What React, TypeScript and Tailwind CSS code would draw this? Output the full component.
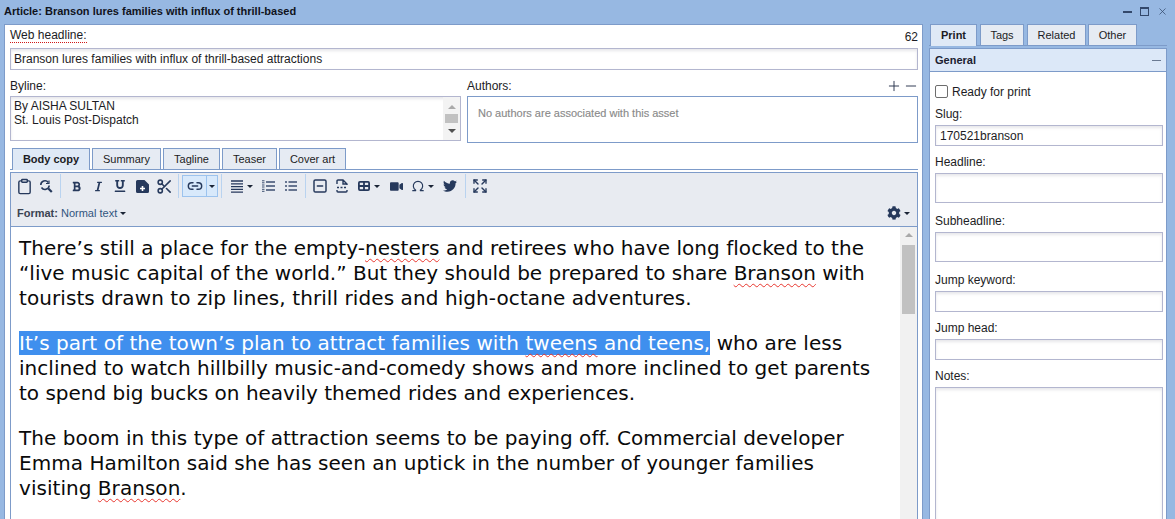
import React from "react";
import { Clipboard, Link2, SquareMinus, Omega, Expand, X, Plus, Minus, Scissors } from "lucide-react";
import { FaBold, FaItalic, FaUnderline, FaVideo, FaTwitter, FaCog } from "react-icons/fa";

const ICON = "#26395c";
const Caret = ({ ml = 3 }: { ml?: number }) => (
  <span className="w-0 h-0 shrink-0 border-x-[3px] border-x-transparent border-t-[3px] border-t-[#1a2436]" style={{ marginLeft: ml }} />
);
const Sep = () => <span className="w-px h-[24px] bg-[#b9d3f0] shrink-0" />;
const Gap = ({ w }: { w: number }) => <span className="shrink-0" style={{ width: w }} />;
const Cell = ({ children }: { children: React.ReactNode }) => (
  <span className="flex items-center justify-center shrink-0 h-[24px] w-[22px]">{children}</span>
);
const Wavy = ({ children }: { children: React.ReactNode }) => (
  <span className="underline decoration-wavy decoration-[#e8362e] decoration-1 underline-offset-[3px]">{children}</span>
);
const Tab = ({ label, active, w }: { label: string; active?: boolean; w: number }) => (
  <div
    className={`flex items-center justify-center border border-[#7d9bc9] border-b-0 shrink-0 ${active ? "h-[22px] bg-[#dfe9f6] font-bold relative" : "h-[21px] bg-[#e6ebf3]"}`}
    style={{ width: w }}
  >
    {label}
  </div>
);
const inputCls = "border border-[#b3b6cf] bg-white shadow-[inset_0_2px_3px_rgba(120,120,140,0.18)]";
const ScrollArrow = ({ up, color }: { up?: boolean; color: string }) => (
  <span
    className={`w-0 h-0 border-x-[4px] border-x-transparent ${up ? "border-b-[4px]" : "border-t-[4px]"}`}
    style={up ? { borderBottomColor: color } : { borderTopColor: color }}
  />
);
const Field = ({ label, h, mt }: { label: string; h: number; mt: number }) => (
  <div style={{ marginTop: mt }}>
    <div className="h-[14px] leading-[14px] mb-[4px]">{label}</div>
    <div className={inputCls} style={{ height: h }} />
  </div>
);

export default function App() {
  return (
    <div className="w-[1175px] h-[519px] overflow-hidden bg-[#97b8e2] text-[12px] text-[#1c1c24] flex flex-col" style={{ fontFamily: '"Liberation Sans", Arial, sans-serif' }}>
      {/* title bar */}
      <div className="h-[24px] shrink-0 flex items-center justify-between pl-[4px] pr-[7px]">
        <span className="font-bold text-[11px] text-[#10131c] -mt-[2px]">Article: Branson lures families with influx of thrill-based</span>
        <div className="flex items-center gap-[8px] -mt-[1px]">
          <span className="w-[9px] h-[2px] bg-[#33486b]" />
          <span className="w-[9px] h-[9px] border border-[#33486b] border-t-2" />
          <X size={11} strokeWidth={1.6} color="#33486b" />
        </div>
      </div>

      <div className="flex-1 flex min-h-0">
        {/* left panel */}
        <div className="ml-[4px] w-[919px] shrink-0 border-l border-t border-r border-[#7d9bc9] bg-white pl-[5px] pr-[4px] flex flex-col min-h-0">
          <div className="h-[23px] flex items-center justify-between">
            <span className="border-b border-dotted border-[#d01818] leading-[13px] mt-[-1px]">Web headline:</span>
            <span>62</span>
          </div>
          <div className={`h-[22px] px-[3px] flex items-center ${inputCls}`}>Branson lures families with influx of thrill-based attractions</div>

          <div className="mt-[6px] flex gap-[6px] h-[65px] shrink-0">
            <div className="w-[451px] shrink-0 flex flex-col">
              <div className="h-[20px] shrink-0 flex items-center">Byline:</div>
              <div className={`h-[45px] shrink-0 flex pl-[3px] ${inputCls}`}>
                <div className="flex-1 leading-[14px] pt-[2px]">By AISHA SULTAN<br />St. Louis Post-Dispatch</div>
                <div className="w-[17px] bg-[#f3f3f3] flex flex-col items-center pt-[8px]">
                  <ScrollArrow up color="#a9a9a9" />
                  <span className="w-[13px] h-[9px] bg-[#c1c1c1] mt-[5px]" />
                  <span className="mt-[6px] flex"><ScrollArrow color="#505050" /></span>
                </div>
              </div>
            </div>
            <div className="flex-1 flex flex-col">
              <div className="h-[20px] shrink-0 flex items-center justify-between">
                <span>Authors:</span>
                <span className="flex gap-[1px] -mr-[1px] text-[#26304a]"><Plus size={16} strokeWidth={1.4} /><Minus size={16} strokeWidth={1.4} /></span>
              </div>
              <div className="h-[47px] shrink-0 border border-[#7d9bc9] pl-[10px] pt-[9px] text-[#8a8a8a] text-[11px] leading-[14px] [-webkit-text-stroke:0.15px_#8a8a8a]">No authors are associated with this asset</div>
            </div>
          </div>

          {/* tabs */}
          <div className="mt-[7px] flex items-start gap-[2px] pl-[2px] h-[22px] shrink-0 text-[11px] border-b border-[#7d9bc9]">
            <Tab label="Body copy" active w={78} />
            <Tab label="Summary" w={69} />
            <Tab label="Tagline" w={57} />
            <Tab label="Teaser" w={55} />
            <Tab label="Cover art" w={67} />
          </div>

          {/* editor */}
          <div className="mt-[2px] flex-1 min-h-0 border-x border-[#7d9bc9] flex flex-col">
            <div className="h-[55px] shrink-0 bg-[#e8ebf1] border-y border-[#7d9bc9] pl-[2px]">
              <div className="h-[26px] flex items-center">
                <Cell><Clipboard size={17} color={ICON} strokeWidth={2} /></Cell>
                <Cell>
                  <svg width="14" height="14" viewBox="0 0 14 14" fill="none" stroke={ICON} strokeWidth="1.6"><path d="M1.800 6a4.200 4.200 0 0 1 7.500-2.600" /><path d="M10.200 6.500a4.200 4.200 0 0 1-7.700 2" /><path d="M9.300 9.500l3.500 3.500" strokeWidth="2.200" /><path d="M10 1.500v3h-3" strokeWidth="1.200" /></svg>
                </Cell>
                <Gap w={3} /><Sep /><Gap w={4} />
                <Cell><FaBold size={11} color={ICON} /></Cell>
                <Cell><FaItalic size={11} color={ICON} /></Cell>
                <Cell><FaUnderline size={12} color={ICON} /></Cell>
                <Cell>
                  <svg width="13" height="13" viewBox="0 0 13 13"><path d="M1.500 0H8.500L13 4.500V11.500A1.500 1.500 0 0 1 11.500 13H1.500A1.500 1.500 0 0 1 0 11.500V1.500A1.500 1.500 0 0 1 1.500 0Z" fill={ICON} /><path d="M6.500 6v5M4 8.500h5" stroke="#fff" strokeWidth="1.600" /></svg>
                </Cell>
                <Cell><Scissors size={17} color={ICON} strokeWidth={2.2} /></Cell>
                <Gap w={3} /><Sep /><Gap w={3} />
                <div className="h-[22px] w-[36px] shrink-0 flex border border-[#9cc3ee] bg-[#d8e9fb]">
                  <span className="w-[24px] flex items-center justify-center border-r border-[#9cc3ee]"><Link2 size={16} color={ICON} strokeWidth={2.2} /></span>
                  <span className="flex-1 flex items-center justify-center"><Caret ml={0} /></span>
                </div>
                <Gap w={3} /><Sep /><Gap w={4} />
                <Cell>
                  <svg width="12" height="13" viewBox="0 0 12 13" stroke={ICON} strokeWidth="1.300"><path d="M0 1h12M0 3.800h12M0 6.600h12M0 9.400h12M0 12.200h12" /></svg>
                </Cell>
                <Caret ml={-1} />
                <Gap w={4} />
                <Cell>
                  <svg width="13" height="12" viewBox="0 0 13 12" stroke="#3d4f70" strokeWidth="1.700"><path d="M4 2h9M4 6h9M4 10h9" /><path d="M0 .8h2.500M0 2.800h2.500M0 5h2.500M0 7h2.500M0 9.300h2.500M0 11.300h2.500" strokeWidth="1" /></svg>
                </Cell>
                <Gap w={1} />
                <Cell>
                  <svg width="12" height="12" viewBox="0 0 12 12" stroke="#3d4f70" strokeWidth="1.700"><path d="M3.500 2h8.500M3.500 6h8.500M3.500 10h8.500M0 2h2M0 6h2M0 10h2" /></svg>
                </Cell>
                <Gap w={3} /><Sep /><Gap w={3} />
                <Cell><SquareMinus size={16} color={ICON} strokeWidth={2.2} /></Cell>
                <Cell>
                  <svg width="12" height="14" viewBox="0 0 12 14" fill="none" stroke={ICON} strokeWidth="1.400"><path d="M1 5V2a1 1 0 0 1 1-1h5l4 4v1M7 1v4h4M11 11v1a1 1 0 0 1-1 1H2a1 1 0 0 1-1-1v-1" /><path d="M1 8.500h10" strokeDasharray="2 1.500" /></svg>
                </Cell>
                <Cell>
                  <svg width="12" height="10" viewBox="0 0 12 10" fill="none" stroke={ICON} strokeWidth="1.800"><rect x="0.900" y="0.900" width="10.200" height="8.200" rx="1" /><path d="M0.900 5h10.200M6 0.900v8.200" /></svg>
                </Cell>
                <Caret ml={-1} />
                <Gap w={5} />
                <Cell><FaVideo size={13} color={ICON} /></Cell>
                <Cell><Omega size={14} color={ICON} strokeWidth={2} /></Cell>
                <Caret ml={-1} />
                <Gap w={5} />
                <Cell><FaTwitter size={14} color={ICON} /></Cell>
                <Gap w={4} /><Sep /><Gap w={3} />
                <Cell><Expand size={16} color={ICON} strokeWidth={2} /></Cell>
              </div>
              <div className="flex items-center justify-between h-[24px] mt-[2px] pl-[4px] pr-[7px]">
                <span className="text-[11px] flex items-center"><span className="font-bold text-[#3a4352]">Format:</span><span className="ml-[3px] text-[#31557e]">Normal text</span><Caret /></span>
                <span className="flex items-center"><FaCog size={14} color={ICON} /><Caret /></span>
              </div>
            </div>
            <div className="flex-1 min-h-0 flex bg-white">
              <div className="flex-1 pl-[8px] pt-[9px] text-[20px] leading-[25px] tracking-[0.04px] text-[#0a0a0a] whitespace-nowrap overflow-hidden" style={{ fontFamily: '"DejaVu Sans", Verdana, sans-serif' }}>
                <p>There’s still a place for the empty-<Wavy>nesters</Wavy> and retirees who have long flocked to the<br /><span className="tracking-normal">“live music capital of the world.” But they should be prepared to share <Wavy>Branson</Wavy> with</span><br /><span className="tracking-[0.08px]">tourists drawn to zip lines, thrill rides and high-octane adventures.</span></p>
                <p className="mt-[20px]"><span className="bg-[#3f8fee] text-white">It’s part of the town’s plan to attract families with <Wavy>tweens</Wavy> and teens,</span> who are less<br />inclined to watch hillbilly music-and-comedy shows and more inclined to get parents<br /><span className="tracking-normal">to spend big bucks on heavily themed rides and experiences.</span></p>
                <p className="mt-[20px]">The boom in this type of attraction seems to be paying off. Commercial developer<br />Emma Hamilton said she has seen an uptick in the number of younger families<br />visiting <Wavy>Branson</Wavy>.</p>
              </div>
              <div className="w-[17px] shrink-0 bg-[#f1f1f1] flex flex-col items-center pt-[6px]">
                <ScrollArrow up color="#a9a9a9" />
                <span className="w-[13px] h-[69px] bg-[#c1c1c1] mt-[8px]" />
              </div>
            </div>
          </div>
        </div>

        {/* right column */}
        <div className="ml-[6px] w-[238px] shrink-0 flex flex-col min-h-0">
          <div className="flex items-start gap-[3px] pl-[1px] h-[22px] shrink-0 text-[11px] border-b border-[#7d9bc9]">
            <Tab label="Print" active w={47} />
            <Tab label="Tags" w={44} />
            <Tab label="Related" w={59} />
            <span className="-ml-[1px]"><Tab label="Other" w={49} /></span>
          </div>
          <div className="mt-[2px] flex-1 min-h-0 border-x border-t border-[#7d9bc9] bg-white flex flex-col">
            <div className="h-[23px] shrink-0 bg-[#dce8f8] border-b border-[#7d9bc9] flex items-center justify-between pl-[5px] pr-[4px]">
              <span className="font-bold text-[11px] text-[#1b2130]">General</span>
              <span className="w-[9px] h-px bg-[#6b7a92] mr-[1px]" />
            </div>
            <div className="pl-[5px] pr-[3px] flex flex-col">
              <div className="mt-[13px] h-[13px] flex items-center gap-[4px]">
                <span className="w-[13px] h-[13px] rounded-[2px] border border-[#6d6d6d] bg-white" />
                <span>Ready for print</span>
              </div>
              <div className="mt-[9px] h-[14px] leading-[14px] mb-[4px]">Slug:</div>
              <div className={`h-[21px] px-[4px] flex items-center ${inputCls}`}>170521branson</div>
              <Field label="Headline:" h={30} mt={9} />
              <Field label="Subheadline:" h={30} mt={11} />
              <Field label="Jump keyword:" h={21} mt={11} />
              <Field label="Jump head:" h={21} mt={9} />
              <Field label="Notes:" h={140} mt={9} />
            </div>
          </div>
        </div>
      </div>
    </div>
  );
}
